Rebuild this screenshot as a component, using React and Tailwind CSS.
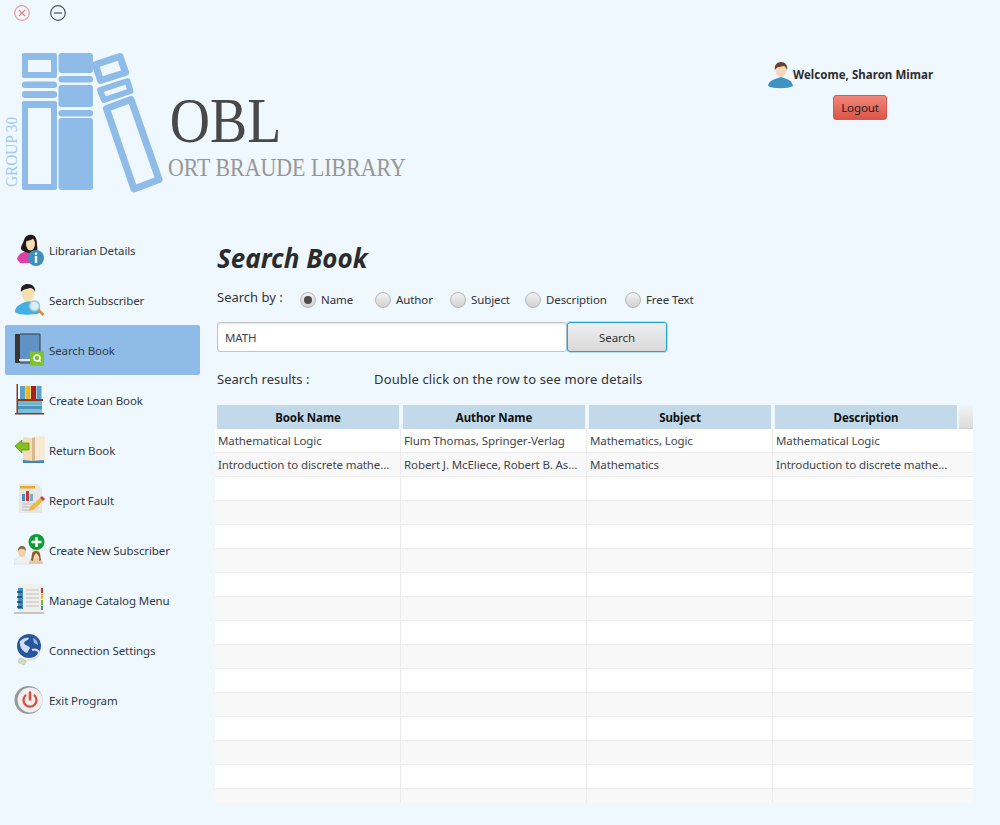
import React from "react";

const F = { fontFamily: '"Noto Sans", "Open Sans", sans-serif' };

function Logo() {
  const c = "#8fbbe9";
  return (
    <svg width="168" height="172" viewBox="0 0 168 172" className="shrink-0">
      <text transform="translate(17 162) rotate(-90)" fontFamily="Liberation Serif" fontSize="17" fill="#9fcaf5" textLength="70" lengthAdjust="spacingAndGlyphs">GROUP 30</text>
      <g transform="translate(0 -25)" fill={c}>
        <path fillRule="evenodd" d="M24 53h31a2 2 0 0 1 2 2v21a2 2 0 0 1-2 2H24a2 2 0 0 1-2-2V55a2 2 0 0 1 2-2ZM28 60v12h23V60Z" />
        <rect x="22" y="81.5" width="35" height="6.5" rx="3" />
        <rect x="22" y="91" width="35" height="7" rx="3" />
        <path fillRule="evenodd" d="M24 101h31a2 2 0 0 1 2 2v85a2 2 0 0 1-2 2H24a2 2 0 0 1-2-2v-85a2 2 0 0 1 2-2ZM28 108v76h23v-76Z" />
        <rect x="58.5" y="53" width="34.5" height="20" rx="3" />
        <rect x="58.5" y="76" width="34.5" height="6.5" rx="3" />
        <rect x="58.5" y="85" width="34.5" height="22" rx="3" />
        <rect x="58.5" y="110" width="34.5" height="6.5" rx="3" />
        <rect x="58.5" y="118" width="34.5" height="72" rx="3" />
      </g>
      <g transform="translate(0 -25)" fill="none" stroke={c} strokeLinejoin="round">
        <path strokeWidth="7" d="M95.5 64.5 120 56.5 125.500 72.500 100.500 80.500Z" />
        <path strokeWidth="6" d="M100 90 127.500 81 130.500 91 104 100Z" />
        <path strokeWidth="7" d="M106.500 108.500 131 99.500 159 179.500 134 189Z" />
      </g>
    </svg>
  );
}

function CloseIcon() {
  return (
    <svg width="18" height="18" viewBox="0 0 18 18">
      <circle cx="9" cy="9" r="7.300" fill="none" stroke="#ee9a92" strokeWidth="1.200" />
      <path d="M6 6l6 6M12 6l-6 6" stroke="#e8837a" strokeWidth="1.200" />
    </svg>
  );
}
function MinIcon() {
  return (
    <svg width="18" height="18" viewBox="0 0 18 18">
      <circle cx="9" cy="9" r="7.300" fill="none" stroke="#4b5563" strokeWidth="1.200" />
      <path d="M5 9h8" stroke="#8d939b" strokeWidth="2" />
    </svg>
  );
}

function IconLibrarian() {
  return (
    <svg width="32" height="34" viewBox="0 0 32 34" className="ml-[2px]">
      <path d="M1 26c1-5 6-7 10-8h6c4 1 6 3 6 8l-4 4H4Z" fill="#e23fa6" />
      <path d="M5 16c0-4 2-5 3-9 1-4 5-6 8-5 4 1 5 5 5 9 0 3 1 5 0 8l-5 1c-4 0-9-1-11-4Z" fill="#1f1a18" />
      <ellipse cx="14.500" cy="11" rx="4.500" ry="6.500" fill="#f8dcae" />
      <path d="M10 8c2 0 6-1 8-3l2 5-1-7-6-1-3 3Z" fill="#1f1a18" />
      <circle cx="20" cy="25" r="8" fill="#3d8fbd" />
      <circle cx="20" cy="20.800" r="1.300" fill="#fff" />
      <rect x="18.800" y="23" width="2.400" height="7" fill="#fff" />
    </svg>
  );
}
function IconSearchSub() {
  return (
    <svg width="32" height="34" viewBox="0 0 32 34">
      <path d="M1 29c0-7 8-9 13-11 6 1 11 3 12 8v4c-6 2-20 3-25-1Z" fill="#45aee2" />
      <ellipse cx="14" cy="10" rx="6.500" ry="8.500" fill="#f7e0b0" />
      <path d="M7 9C6 3 10 1 14 1s8 3 7 8c-1-3-3-4-5-4-3 1-7 1-9 4Z" fill="#222" />
      <circle cx="20.500" cy="23" r="5" fill="#d9eef8" stroke="#9cc7de" strokeWidth="1.500" />
      <path d="M24.500 27l5 5" stroke="#e88a2a" strokeWidth="2.500" />
    </svg>
  );
}
function IconBook() {
  return (
    <svg width="32" height="34" viewBox="0 0 32 34">
      <rect x="1" y="1" width="25" height="29" rx="1" fill="#5f93c6" />
      <rect x="1" y="1" width="5" height="29" rx="1" fill="#3a3530" />
      <path d="M6 1h20v29H6" fill="none" stroke="#3c3c3c" />
      <rect x="5" y="26" width="21" height="2" fill="#e9e9e9" />
      <rect x="16" y="18.500" width="14" height="14" rx="1" fill="#7dc22e" />
      <circle cx="23" cy="25" r="3" fill="none" stroke="#fff" strokeWidth="1.500" />
      <path d="M25 27l2 2" stroke="#fff" strokeWidth="1.500" />
    </svg>
  );
}
function IconShelf() {
  return (
    <svg width="32" height="34" viewBox="0 0 32 34">
      <path d="M2.500 1h1.500v30H2.500Z" fill="#8a3a20" />
      <rect x="6" y="3" width="5" height="13" fill="#5ba0c6" />
      <rect x="11.500" y="3" width="5" height="13" fill="#efb420" />
      <rect x="17" y="3" width="5" height="13" fill="#a81f1c" />
      <rect x="22.500" y="3" width="5" height="13" fill="#5ba0c6" />
      <rect x="3" y="16" width="26" height="2" fill="#8a3a20" />
      <rect x="4" y="18" width="24" height="4" fill="#6fb4d0" />
      <rect x="4" y="22.500" width="24" height="3.500" fill="#4b93b8" />
      <rect x="4" y="26" width="24" height="4" fill="#7fc0d8" />
      <rect x="1" y="30" width="29" height="1.500" fill="#8a3a20" />
    </svg>
  );
}
function IconReturn() {
  return (
    <svg width="32" height="34" viewBox="0 0 32 34">
      <path d="M9 27h21v3H9Z" fill="#3d84c2" />
      <path d="M9 4l9 1v23l-9-1Z" fill="#f5ddb8" />
      <path d="M18 5l10-2 3 1v23l-13 1Z" fill="#f8ead2" />
      <path d="M18 5l3-1v24l-3 0Z" fill="#d9b88e" />
      <path d="M1 13l7-6v3h7v7H8v3Z" fill="#84bf22" stroke="#5d9014" strokeWidth=".8" />
    </svg>
  );
}
function IconReport() {
  return (
    <svg width="32" height="34" viewBox="0 0 32 34">
      <path d="M5 1h18l5 5v24H5Z" fill="#e6e6e3" />
      <rect x="6" y="3" width="15" height="2.500" fill="#eda825" />
      <rect x="8" y="11" width="3" height="7" fill="#4f86c6" />
      <rect x="12" y="8" width="3" height="10" fill="#c63a32" />
      <rect x="16" y="11" width="3" height="7" fill="#7aa9d0" />
      <path d="M8 21h14M8 24h11M8 27h9" stroke="#bcbcbc" />
      <path d="M15 28l1-4 10-9 3 3-10 9Z" fill="#eeb93c" />
      <path d="M26 15l2-2 3 3-2 2Z" fill="#d43b2f" />
    </svg>
  );
}
function IconNewSub() {
  return (
    <svg width="32" height="34" viewBox="0 0 32 34">
      <path d="M0 31c0-5 5-7 8-8 4 1 8 3 8 8Z" fill="#f1f1f1" stroke="#ccc" strokeWidth=".5" />
      <ellipse cx="8" cy="19" rx="4" ry="5" fill="#f2cfa5" />
      <path d="M4 18c0-4 2-5 4-5s4 1 4 5c-2-3-6-3-8 0Z" fill="#8a6a50" />
      <path d="M15 31c0-5 3-6 6-7 4 1 8 2 8 7Z" fill="#e3c9a8" />
      <ellipse cx="22" cy="21" rx="4" ry="5" fill="#f5d6ad" />
      <path d="M17 27c1-4 0-9 5-9s4 5 5 9l-2 1c1-3 0-6-3-8-2 2-3 5-3 8Z" fill="#8a5a2e" />
      <circle cx="22.500" cy="9" r="8" fill="#0e9d34" />
      <path d="M22.500 4v10M17.500 9h10" stroke="#fff" strokeWidth="2.600" />
    </svg>
  );
}
function IconCatalog() {
  return (
    <svg width="32" height="34" viewBox="0 0 32 34">
      <rect x="0" y="29" width="30" height="2" fill="#c4c6c4" />
      <rect x="4" y="1" width="24" height="28" fill="#efefec" />
      <rect x="4" y="5" width="5" height="21" fill="#3f8ec4" />
      <path d="M3 9h5M3 14h5M3 19h5M3 24h5" stroke="#23435e" strokeWidth="1.500" />
      <path d="M12 7h13M12 11h13M12 15h13M12 19h13M12 23h13" stroke="#c0c0c0" />
      <rect x="27" y="5" width="2" height="5" fill="#c2342c" />
      <rect x="27" y="11" width="2" height="5" fill="#edb624" />
      <rect x="27" y="17" width="2" height="5" fill="#79b932" />
      <rect x="27" y="23" width="2" height="4" fill="#3f8ec4" />
    </svg>
  );
}
function IconConn() {
  return (
    <svg width="32" height="34" viewBox="0 0 32 34">
      <circle cx="15" cy="13" r="12" fill="#27559f" />
      <path d="M6 8c3-3 7-4 9-3-1 3-4 2-5 5 1 3 5 2 6 5l-3 5c-4-1-8-6-7-12Z" fill="#cfdcef" />
      <path d="M19 5c3 1 5 4 5 7l-4-2Z" fill="#9cb7db" />
      <path d="M6 26c6 3 18 1 19-6 0-3-4-4-7-3" fill="none" stroke="#dfe3e6" strokeWidth="2" />
      <path d="M6 25l6 3-2 4-6-3Z" fill="#d6e0b8" stroke="#9aa" strokeWidth=".5" />
    </svg>
  );
}
function IconExit() {
  return (
    <svg width="32" height="34" viewBox="0 0 32 34">
      <circle cx="14.500" cy="17" r="14" fill="#999" />
      <circle cx="16" cy="17" r="12.500" fill="#efefef" />
      <path d="M16 9.500v7" stroke="#d9503f" strokeWidth="2.600" strokeLinecap="round" />
      <path d="M11.500 12.500a6.500 6.500 0 1 0 9 0" fill="none" stroke="#d9503f" strokeWidth="2.300" strokeLinecap="round" />
    </svg>
  );
}
function IconUser() {
  return (
    <svg width="26" height="28" viewBox="0 0 26 28">
      <path d="M0 25c1-6 7-7 13-9 6 2 11 3 12 9-5 3-20 3-25 0Z" fill="#3e93c2" />
      <ellipse cx="13" cy="9" rx="5.500" ry="7" fill="#f6d7b8" />
      <path d="M7 9c-1-5 2-8 6-8s7 3 6 8c-1-2-2-4-3-4-3 1-7 0-9 4Z" fill="#6a4428" />
    </svg>
  );
}

const menu = [
  ["Librarian Details", IconLibrarian],
  ["Search Subscriber", IconSearchSub],
  ["Search Book", IconBook, true],
  ["Create Loan Book", IconShelf],
  ["Return Book", IconReturn],
  ["Report Fault", IconReport],
  ["Create New Subscriber", IconNewSub],
  ["Manage Catalog Menu", IconCatalog],
  ["Connection Settings", IconConn],
  ["Exit Program", IconExit],
];

const radios = [
  ["Name", "w-[75px]", true],
  ["Author", "w-[75px]"],
  ["Subject", "w-[75px]"],
  ["Description", "w-[100px]"],
  ["Free Text", "w-[80px]"],
];

const rows = [
  ["Mathematical Logic", "Flum Thomas, Springer-Verlag", "Mathematics, Logic", "Mathematical Logic"],
  ["Introduction to discrete mathe...", "Robert J. McEliece, Robert B. As...", "Mathematics", "Introduction to discrete mathe..."],
  ...Array.from({ length: 14 }, () => ["", "", "", ""]),
];
const heads = ["Book Name", "Author Name", "Subject", "Description"];

export default function App() {
  return (
    <div style={F} className="w-[1000px] h-[825px] overflow-hidden bg-[#eff7ff] text-[11.5px] tracking-[-0.1px] text-[#333]">
      <div className="flex items-center gap-[18px] h-[25px] pl-[13px]">
        <CloseIcon />
        <MinIcon />
      </div>
      <div className="flex h-[200px]">
        <div className="flex w-[738px] h-[172px]">
          <Logo />
          <div className="pt-[64px] tracking-normal" style={{ fontFamily: '"Liberation Serif", serif' }}>
            <div className="text-[63px] leading-[64px] text-[#484848] pl-[2px] origin-left scale-x-[0.885]">OBL</div>
            <div className="text-[25px] leading-[26px] text-[#979797] mt-[2px] whitespace-nowrap origin-left scale-x-[0.875]">ORT BRAUDE LIBRARY</div>
          </div>
        </div>
        <div className="pt-[36px] flex flex-col items-start">
          <div className="flex items-center h-[28px] pl-[30px]">
            <IconUser />
            <span className="font-bold text-[#2d2d2d] -ml-[1px] tracking-[0.03px]">Welcome, Sharon Mimar</span>
          </div>
          <button className="mt-[6px] ml-[95px] w-[54px] h-[25px] rounded-[3px] border border-[#d9574c] bg-gradient-to-b from-[#f2877b] to-[#d95447] text-[#222] flex items-center justify-center">
            Logout
          </button>
        </div>
      </div>
      <div className="flex">
        <nav className="w-[217px] pl-[5px] shrink-0">
          {menu.map(([label, Icon, active]) => (
            <div
              key={label}
              className={`w-[195px] h-[50px] flex items-center rounded-[2px] pl-[9px] ${active ? "bg-[#8fbbe8]" : ""}`}
            >
              <span className="w-[35px] flex shrink-0"><Icon /></span>
              <span className="text-[#2f3a45] pt-[2px]">{label}</span>
            </div>
          ))}
        </nav>
        <main className="flex-1 pt-[16px]">
          <h1 className="text-[26px] leading-[34px] font-bold italic text-[#2b2b2b] tracking-normal">Search Book</h1>
          <div className="flex items-center mt-[13px] h-[24px]">
            <span className="text-[13px] tracking-normal w-[83px] -mt-[4px]">Search by :</span>
            {radios.map(([label, w, on]) => (
              <label key={label} className={`flex items-center gap-[5px] ${w}`}>
                <span className="w-[16px] h-[16px] rounded-full border border-[#b5b5b5] bg-gradient-to-b from-[#f2f2f2] to-[#d2d2d2] flex items-center justify-center shrink-0">
                  {on && <span className="w-[8px] h-[8px] rounded-full bg-[#4a4a4a]" />}
                </span>
                <span>{label}</span>
              </label>
            ))}
          </div>
          <div className="flex mt-[10px] h-[30px]">
            <div className="w-[350px] h-[30px] bg-white border border-[#c4c4c4] rounded-[3px] flex items-center pl-[7px] pt-[1px] text-[#444] shadow-[inset_0_1px_2px_rgba(0,0,0,0.12)]">MATH</div>
            <button className="w-[100px] h-[30px] pt-[1px] rounded-[3px] border border-[#1ea5dc] shadow-[0_0_0_0.5px_#7cc9e8] bg-gradient-to-b from-[#efefef] to-[#d8d8d8] text-[#333]">Search</button>
          </div>
          <div className="flex mt-[18px] h-[20px] items-center text-[13px] tracking-normal">
            <span className="w-[157px]">Search results :</span>
            <span className="tracking-[0.14px]">Double click on the row to see more details</span>
          </div>
          <div className="mt-[15px] -ml-[2px] w-[758px] h-[398px] overflow-hidden">
            <div className="flex h-[24px] pl-[2px] gap-[4px] bg-[#eff7ff]">
              {heads.map((h) => (
                <div key={h} className="w-[182px] bg-[#c1d9e8] flex items-center justify-center pt-[2px] font-bold text-[#111]">{h}</div>
              ))}
              <div className="w-[14px] -ml-[2px] bg-gradient-to-b from-[#f3f3f3] to-[#dcdcdc] border-b border-[#cfcfcf]" />
            </div>
            {rows.map((r, i) => (
              <div key={i} className={`flex h-[24px] border-b border-[#ececec] ${i % 2 ? "bg-[#f8f8f8]" : "bg-white"}`}>
                {r.map((c, j) => (
                  <div
                    key={j}
                    className={`h-full pl-[3px] pt-[1px] flex items-center whitespace-nowrap overflow-hidden text-[#3d4650] ${j === 3 ? "flex-1" : "w-[186px] border-r border-[#ececec]"}`}
                  >
                    {c}
                  </div>
                ))}
              </div>
            ))}
          </div>
        </main>
      </div>
    </div>
  );
}
